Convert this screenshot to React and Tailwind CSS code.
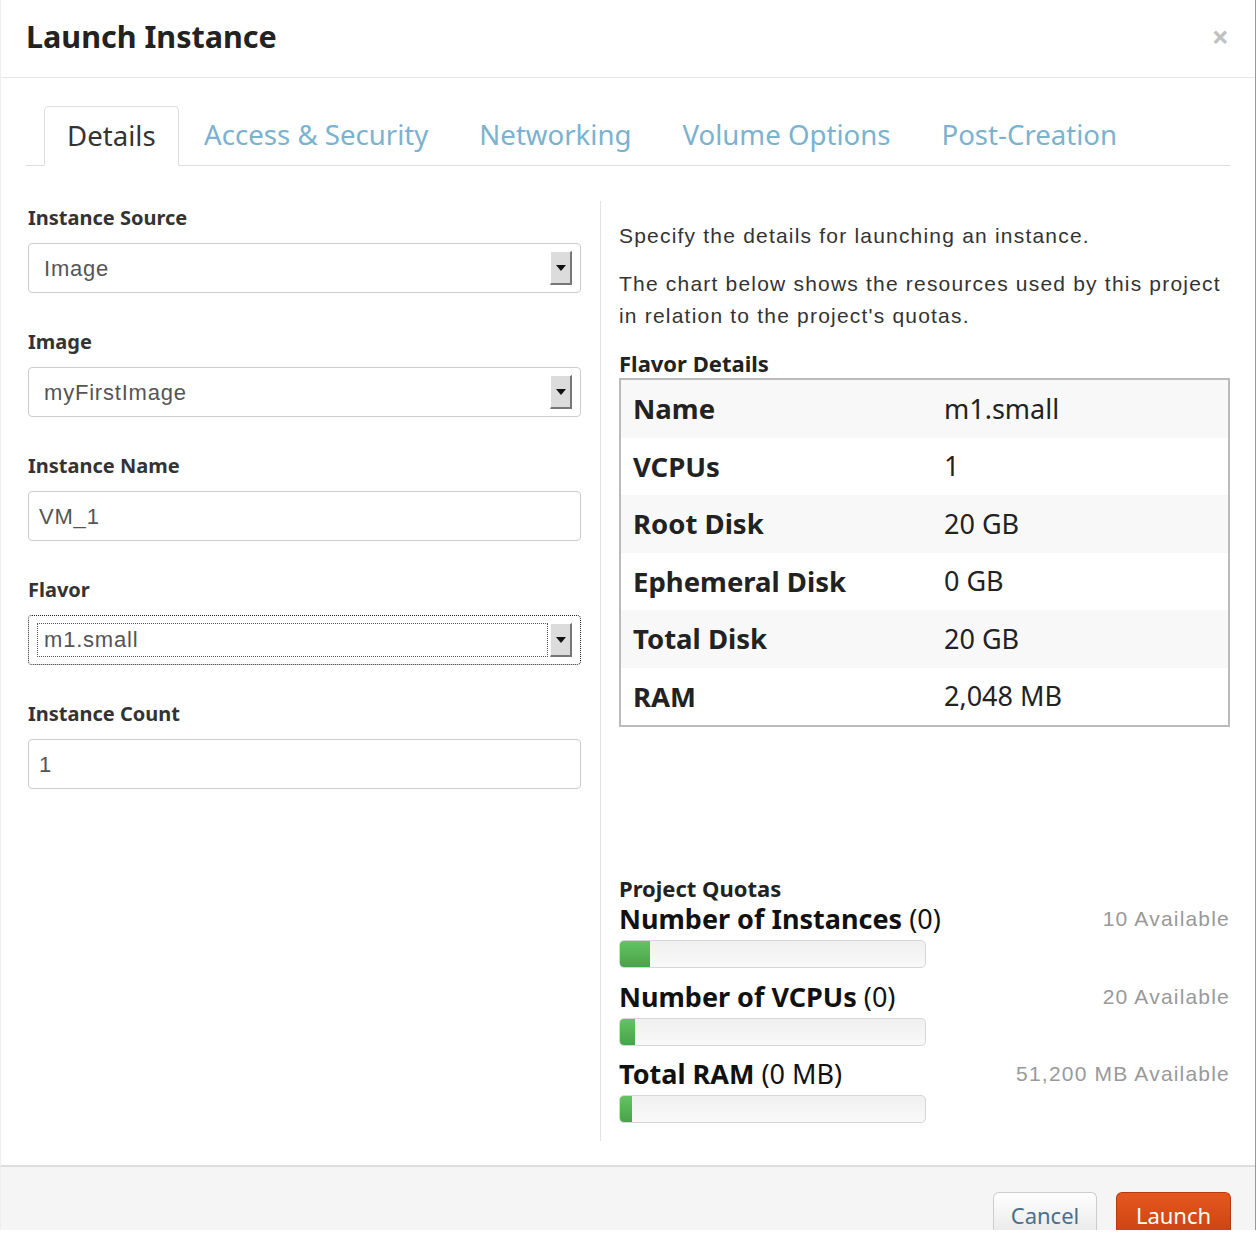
import React from 'react';

const ub = { fontFamily: '"Noto Sans", "Open Sans", sans-serif' };
const arial = { fontFamily: '"Liberation Sans", Arial, sans-serif' };

function SelectBox({ value, focused }) {
  return (
    <div
      className={
        'flex h-[50px] items-center justify-between rounded-[4px] bg-white pl-[15px] pr-[8px] ' +
        (focused ? 'border border-dotted border-[#222]' : 'border border-[#cccccc]')
      }
    >
      <span
        className={
          'text-[22px] tracking-[0.8px] text-[#555] ' +
          (focused ? '-ml-[7px] flex-1 border border-dotted border-[#555] px-[6px] leading-[32px]' : '')
        }
        style={arial}
      >
        {value}
      </span>
      <span className="ml-[2px] flex h-[34px] w-[22px] items-center justify-center border-b-2 border-r-2 border-l border-t border-[#777] border-l-white border-t-white bg-[#dcdcdc]">
        <svg width="10" height="6" viewBox="0 0 10 6">
          <path d="M0 0h10L5 6z" fill="#111" />
        </svg>
      </span>
    </div>
  );
}

function TextBox({ value }) {
  return (
    <div className="flex h-[50px] items-center rounded-[4px] border border-[#cccccc] bg-white px-[10px]">
      <span className="text-[22px] tracking-[0.8px] text-[#555]" style={arial}>
        {value}
      </span>
    </div>
  );
}

function Field({ label, children }) {
  return (
    <div className="mb-[34px]">
      <div className="mb-[10px] text-[20px] font-bold leading-[30px] text-[#333]">{label}</div>
      {children}
    </div>
  );
}

const flavor = [
  ['Name', 'm1.small'],
  ['VCPUs', '1'],
  ['Root Disk', '20 GB'],
  ['Ephemeral Disk', '0 GB'],
  ['Total Disk', '20 GB'],
  ['RAM', '2,048 MB'],
];

const quotas = [
  { name: 'Number of Instances', used: '(0)', avail: '10 Available', fill: 30 },
  { name: 'Number of VCPUs', used: '(0)', avail: '20 Available', fill: 15 },
  { name: 'Total RAM', used: '(0 MB)', avail: '51,200 MB Available', fill: 12 },
];

export default function App() {
  return (
    <div className="h-[1236px] w-[1258px] bg-white" style={ub}>
      <div className="flex h-[1230px] w-[1256px] flex-col border-l border-r border-l-[#eeeeee] border-r-[#999]">
        {/* header */}
        <div className="flex h-[78px] items-center justify-between border-b border-[#e5e5e5] pb-[4px] pl-[25px] pr-[26px]">
          <h1 className="text-[30.5px] font-bold text-[#222]">Launch Instance</h1>
          <span className="text-[30px] font-bold leading-none text-[#c0c0c0]">×</span>
        </div>

        {/* body */}
        <div className="flex-1 px-[25px] pt-[28px]">
          <div className="flex h-[60px] items-end border-b border-[#dddddd] pl-[18px]">
            <div className="-mb-px flex h-[60px] items-center rounded-t-[5px] border border-[#dddddd] border-b-white bg-white px-[22px] text-[27.6px] text-[#333]">
              Details
            </div>
            {['Access & Security', 'Networking', 'Volume Options', 'Post-Creation'].map((t) => (
              <div key={t} className="flex h-[60px] items-center px-[25.5px] text-[27.6px] text-[#7ab2cf]">
                {t}
              </div>
            ))}
          </div>

          <div className="flex pt-[37px]">
            <div className="w-[555px] pl-[2px]">
              <Field label="Instance Source">
                <SelectBox value="Image" />
              </Field>
              <Field label="Image">
                <SelectBox value="myFirstImage" />
              </Field>
              <Field label="Instance Name">
                <TextBox value="VM_1" />
              </Field>
              <Field label="Flavor">
                <SelectBox value="m1.small" focused />
              </Field>
              <Field label="Instance Count">
                <TextBox value="1" />
              </Field>
            </div>

            <div className="-mt-[2px] ml-[19px] h-[940px] w-px bg-[#e3e3e3]" />

            <div className="ml-[18px] flex flex-1 flex-col">
              <p className="mt-[18px] text-[21px] leading-[30px] tracking-[1.2px] text-[#333]" style={arial}>
                Specify the details for launching an instance.
              </p>
              <p className="mt-[17px] text-[21px] leading-[32px] tracking-[1.2px] text-[#333]" style={arial}>
                The chart below shows the resources used by this project in relation to the project's quotas.
              </p>
              <div className="mt-[16px] text-[22px] font-bold leading-[30px] text-[#222]">Flavor Details</div>
              <div className="border-2 border-[#bbbbbb]">
                {flavor.map(([k, v], i) => (
                  <div key={k} className={'flex h-[57.5px] items-center px-[12px] ' + (i % 2 === 0 ? 'bg-[#f8f8f8]' : 'bg-white')}>
                    <span className="w-[311px] text-[27.5px] font-bold text-[#222]">{k}</span>
                    <span className="text-[27px] text-[#222]">{v}</span>
                  </div>
                ))}
              </div>

              <div className="mt-[147px] text-[22px] font-bold leading-[28px] text-[#222]">Project Quotas</div>
              {quotas.map((q) => (
                <div key={q.name} className="mb-[11.5px]">
                  <div className="flex items-center justify-between leading-[34px]">
                    <span className="text-[27px] text-[#111]">
                      <span className="font-bold">{q.name}</span> {q.used}
                    </span>
                    <span className="text-[21px] tracking-[1.2px] text-[#999]" style={arial}>
                      {q.avail}
                    </span>
                  </div>
                  <div className="mt-[4px] h-[28px] w-[307px] overflow-hidden rounded-[5px] border border-[#d6d6d6] bg-gradient-to-b from-[#f0f0f0] to-[#f9f9f9]">
                    <div className="h-full bg-gradient-to-b from-[#62c462] to-[#4aa24a]" style={{ width: q.fill }} />
                  </div>
                </div>
              ))}
            </div>
          </div>
        </div>

        {/* footer */}
        <div className="flex h-[65px] items-end justify-end gap-[19px] border-t-2 border-[#dddddd] bg-[#f5f5f5] pr-[24px]">
          <button className="h-[38px] w-[104px] rounded-t-[6px] border border-b-0 border-[#cccccc] bg-gradient-to-b from-white to-[#ebebeb] pt-[6px] text-[22px] text-[#4a6f8a]">
            Cancel
          </button>
          <button className="h-[38px] w-[115px] rounded-t-[6px] border border-b-0 border-[#b23c10] bg-gradient-to-b from-[#e5571f] to-[#cf4412] pt-[6px] text-[22px] text-white">
            Launch
          </button>
        </div>
      </div>
    </div>
  );
}
